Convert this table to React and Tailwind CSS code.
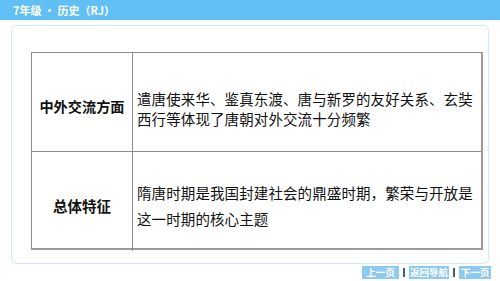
import React from 'react';

const font = { fontFamily: '"Noto Sans CJK SC", "Liberation Sans", sans-serif' };

function NavButton({ label, width }) {
  return (
    <div className={`h-[13px] ${width} bg-[#8ecaf0] flex items-center justify-center text-white text-[9.5px] font-bold leading-none`}>
      {label}
    </div>
  );
}

function Sep() {
  return <div className="w-[2px] h-[9px] bg-[#3d5f86]" />;
}

export default function App() {
  return (
    <div className="w-[500px] h-[281px] bg-white flex flex-col overflow-hidden" style={font}>
      <div className="h-[20px] shrink-0 bg-[#60bff4] flex items-center px-[13px] text-white text-[11px] font-bold leading-none">
        7年级 · 历史（RJ）
      </div>

      <div className="mt-[5px] mx-[11px] h-[239px] shrink-0 border border-[#cdeafb] rounded-[6px] bg-white pl-[19px] pt-[26px]">
        <div className="w-[452px] h-[198px] grid grid-cols-[101px_1fr] grid-rows-[99px_99px] border border-[#8c8c8c] border-r-2 border-b-2 border-r-[#9a9a9a] border-b-[#9a9a9a] text-[#111] text-[14.5px]">
          <div className="border-r border-b border-[#8c8c8c] flex items-center justify-center font-bold pt-[10px] text-[14.2px]">
            中外交流方面
          </div>
          <div className="border-b border-[#8c8c8c] flex items-center pl-[4px] pt-[14px] leading-[20px] tracking-[0.1px]">
            <div>
              遣唐使来华、鉴真东渡、唐与新罗的友好关系、玄奘
              <br />
              西行等体现了唐朝对外交流十分频繁
            </div>
          </div>
          <div className="border-r border-[#8c8c8c] flex items-center justify-center font-bold pt-[8px] text-[14.5px]">
            总体特征
          </div>
          <div className="flex items-center pl-[4px] pt-[8px] leading-[26px] tracking-[0.1px]">
            <div>
              隋唐时期是我国封建社会的鼎盛时期，繁荣与开放是
              <br />
              这一时期的核心主题
            </div>
          </div>
        </div>
      </div>

      <div className="mt-[2px] flex items-center justify-end gap-[4px] pr-[9px]">
        <NavButton label="上一页" width="w-[37px]" />
        <Sep />
        <NavButton label="返回导航" width="w-[40px]" />
        <Sep />
        <NavButton label="下一页" width="w-[32px]" />
      </div>
    </div>
  );
}
